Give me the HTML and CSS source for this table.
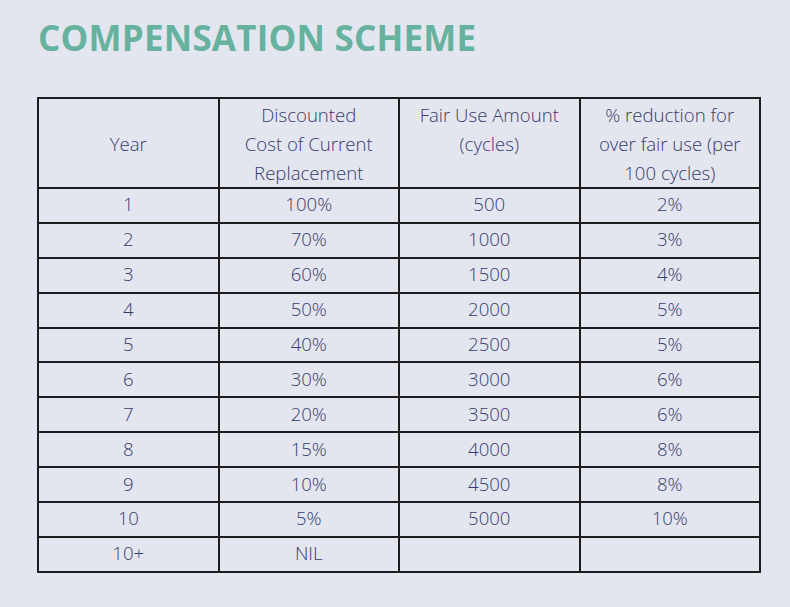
FILE: index.html
```html
<!DOCTYPE html>
<html lang="en">
<head>
<meta charset="utf-8">
<title>Compensation Scheme</title>
<link rel="stylesheet" href="styles.css">
</head>
<body>
<main class="page">
  <h1 class="title">COMPENSATION SCHEME</h1>
  <table class="scheme">
    <thead>
      <tr>
        <th class="mid">Year</th>
        <th>Discounted<br>Cost of Current<br>Replacement</th>
        <th>Fair Use Amount<br>(cycles)</th>
        <th>% reduction for<br>over fair use (per<br>100 cycles)</th>
      </tr>
    </thead>
    <tbody>
      <tr><td>1</td><td>100%</td><td>500</td><td>2%</td></tr>
      <tr><td>2</td><td>70%</td><td>1000</td><td>3%</td></tr>
      <tr><td>3</td><td>60%</td><td>1500</td><td>4%</td></tr>
      <tr><td>4</td><td>50%</td><td>2000</td><td>5%</td></tr>
      <tr><td>5</td><td>40%</td><td>2500</td><td>5%</td></tr>
      <tr><td>6</td><td>30%</td><td>3000</td><td>6%</td></tr>
      <tr><td>7</td><td>20%</td><td>3500</td><td>6%</td></tr>
      <tr><td>8</td><td>15%</td><td>4000</td><td>8%</td></tr>
      <tr><td>9</td><td>10%</td><td>4500</td><td>8%</td></tr>
      <tr><td>10</td><td>5%</td><td>5000</td><td>10%</td></tr>
      <tr><td>10+</td><td>NIL</td><td></td><td></td></tr>
    </tbody>
  </table>
</main>
</body>
</html>
```

FILE: styles.css
```css
html, body {
  margin: 0;
  padding: 0;
  background: #e4e6ef;
}

.page {
  padding: 14px 0 0 37px;
  font-family: "Open Sans", "Liberation Sans", sans-serif;
}

.title {
  margin: 0 0 35px 1px;
  font-size: 35px;
  font-weight: 700;
  line-height: 48px;
  color: #66b29f;
  letter-spacing: 0.2px;
}

.scheme {
  width: 724px;
  border-collapse: collapse;
  table-layout: fixed;
  border: 2px solid #151515;
  color: #353b6d;
  font-size: 18.6px;
  font-weight: 300;
}

.scheme th,
.scheme td {
  border: 2px solid #1c1c1c;
  text-align: center;
  padding: 0;
  font-weight: 300;
}

.scheme th {
  height: 87px;
  vertical-align: top;
  line-height: 29px;
  padding-top: 1px;
}

.scheme th.mid {
  vertical-align: middle;
}

.scheme td {
  height: 30.9px;
  line-height: 30px;
  padding-bottom: 2px;
  vertical-align: middle;
}
```
